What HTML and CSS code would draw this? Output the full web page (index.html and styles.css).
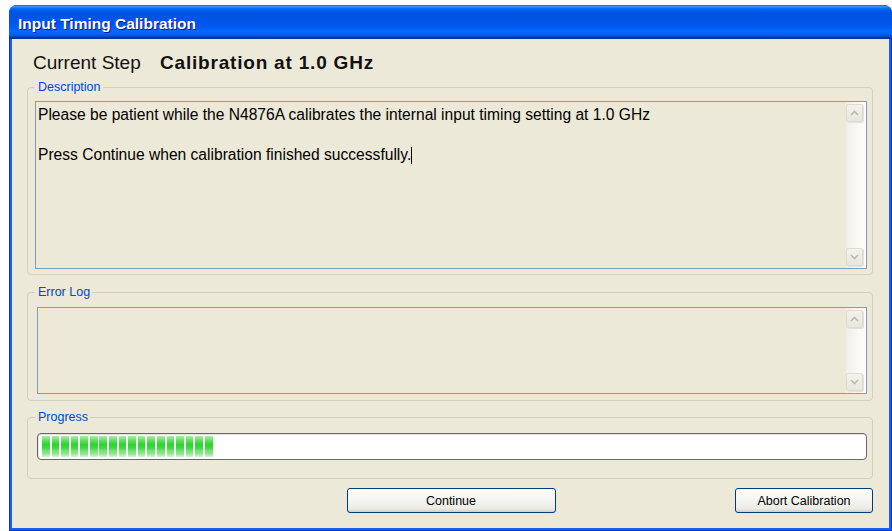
FILE: index.html
```html
<!DOCTYPE html>
<html lang="en">
<head>
<meta charset="utf-8">
<title>Input Timing Calibration</title>
<link rel="stylesheet" href="styles.css">
</head>
<body>
<div class="window">
  <div class="titlebar">Input Timing Calibration</div>
  <div class="frame">
    <div class="body">
      <div class="step-row">
        <span class="step-label">Current Step</span>
        <span class="step-name">Calibration at 1.0 GHz</span>
      </div>

      <fieldset class="group group-desc">
        <legend>Description</legend>
        <div class="textbox textbox-desc">
          <div class="textbox-text">
            <p>Please be patient while the N4876A calibrates the internal input timing setting at 1.0 GHz</p>
            <p>Press Continue when calibration finished successfully.<span class="caret"></span></p>
          </div>
          <div class="scrollbar">
            <div class="scroll-btn">
              <svg viewBox="0 0 9 6" width="9" height="6"><path d="M1 5 L4.5 1.5 L8 5" fill="none" stroke="#bdbbae" stroke-width="1.6"/></svg>
            </div>
            <div class="scroll-btn">
              <svg viewBox="0 0 9 6" width="9" height="6"><path d="M1 1 L4.5 4.5 L8 1" fill="none" stroke="#bdbbae" stroke-width="1.6"/></svg>
            </div>
          </div>
        </div>
      </fieldset>

      <fieldset class="group group-log">
        <legend>Error Log</legend>
        <div class="textbox textbox-log">
          <div class="textbox-text"></div>
          <div class="scrollbar">
            <div class="scroll-btn">
              <svg viewBox="0 0 9 6" width="9" height="6"><path d="M1 5 L4.5 1.5 L8 5" fill="none" stroke="#bdbbae" stroke-width="1.6"/></svg>
            </div>
            <div class="scroll-btn">
              <svg viewBox="0 0 9 6" width="9" height="6"><path d="M1 1 L4.5 4.5 L8 1" fill="none" stroke="#bdbbae" stroke-width="1.6"/></svg>
            </div>
          </div>
        </div>
      </fieldset>

      <fieldset class="group group-progress">
        <legend>Progress</legend>
        <div class="progress">
          <span class="seg"></span><span class="seg"></span><span class="seg"></span>
          <span class="seg"></span><span class="seg"></span><span class="seg"></span>
          <span class="seg"></span><span class="seg"></span><span class="seg"></span>
          <span class="seg"></span><span class="seg"></span><span class="seg"></span>
          <span class="seg"></span><span class="seg"></span><span class="seg"></span>
          <span class="seg"></span><span class="seg"></span><span class="seg"></span>
        </div>
      </fieldset>

      <div class="buttons">
        <span></span>
        <button class="btn btn-continue">Continue</button>
        <button class="btn btn-abort">Abort Calibration</button>
      </div>
    </div>
  </div>
</div>
</body>
</html>
```
FILE: styles.css
```css
html, body {
  margin: 0;
  padding: 0;
  background: #ffffff;
}

body {
  font-family: "Liberation Sans", Arial, sans-serif;
  overflow: hidden;
}

/* ---- window chrome ---- */
.window {
  margin: 5px 0 0 9px;
  width: 883px;
  height: 526px;
  display: flex;
  flex-direction: column;
  border-radius: 8px 8px 0 0;
  overflow: hidden;
  background: #0831d9;
}

.titlebar {
  height: 34px;
  flex: none;
  box-sizing: border-box;
  padding: 4px 0 0 9px;
  display: flex;
  align-items: center;
  color: #ffffff;
  font-weight: bold;
  font-size: 15.5px;
  text-shadow: 1px 1px #0f1089;
  background: linear-gradient(to bottom,
    #0058ee 0%, #3a93ff 4%, #288eff 6%, #127dff 8%, #036ffc 10%,
    #0262ee 14%, #0057e5 20%, #0054e3 24%, #0055eb 56%, #005bf5 66%,
    #026afe 76%, #0062ef 86%, #0052d6 92%, #0040ab 94%, #003092 100%);
}

.frame {
  flex: 1;
  display: flex;
  border: 1px solid #0831d9;
  border-top: 0;
  padding: 0 2px 2px 2px;
  background: #1660ee;
}

.body {
  flex: 1;
  background: #ece9d8;
  display: flex;
  flex-direction: column;
  padding: 13px 16px 0 15px;
}

/* ---- current step heading ---- */
.step-row {
  height: 22px;
  line-height: 22px;
  padding-left: 6px;
  font-size: 19px;
  color: #111111;
  white-space: nowrap;
}

.step-label {
  margin-right: 14px;
}

.step-name {
  font-weight: bold;
  font-size: 19px;
  letter-spacing: 0.8px;
}

/* ---- group boxes ---- */
.group {
  margin: 0;
  min-width: 0;
  border: 1px solid #d0d0bf;
  border-radius: 4px;
  padding: 7px 5px 5px 7px;
}

.group legend {
  font-size: 12.5px;
  line-height: 14px;
  color: #0046d5;
  padding: 0 2px 0 3px;
  margin-left: 0;
}

.group-desc {
  margin-top: 6px;
}

.group-log {
  margin-top: 10px;
  padding: 8px 5px 6px 9px;
}

.group-log legend,
.group-progress legend {
  margin-left: -2px;
}

.group-progress {
  margin-top: 9px;
  padding: 9px 5px 18px 9px;
}

/* ---- read-only text boxes ---- */
.textbox {
  display: flex;
  border: 1px solid #7f9db9;
  background: #ece9d8;
}

.textbox-desc {
  height: 166px;
}

.textbox-log {
  height: 85px;
}

.textbox-text {
  flex: 1;
  padding: 3px 2px;
  font-size: 15.6px;
  line-height: 20px;
  color: #000000;
  white-space: nowrap;
}

.textbox-text p {
  margin: 0 0 20px 0;
}

.caret {
  display: inline-block;
  width: 1px;
  height: 17px;
  background: #000000;
  vertical-align: -4px;
}

.scrollbar {
  width: 20px;
  flex: none;
  display: flex;
  flex-direction: column;
  justify-content: space-between;
  padding: 2px 3px 2px 0;
  box-sizing: border-box;
  background: linear-gradient(to right, #efeee7 0%, #f7f6f2 45%, #fefefd 100%);
}

.scroll-btn {
  width: 17px;
  height: 18px;
  box-sizing: border-box;
  border: 1px solid #dedcd1;
  border-radius: 2px;
  background: linear-gradient(to bottom, #f3f2ec, #e8e6de);
  box-shadow: 1px 1px 0 #e4e2d8;
  display: flex;
  align-items: center;
  justify-content: center;
}

/* ---- progress bar ---- */
.progress {
  height: 27px;
  box-sizing: border-box;
  border: 1px solid #686868;
  border-radius: 4px;
  background: #ffffff;
  padding: 2px 4px;
  display: flex;
  gap: 1.9px;
  box-shadow: inset 1px 1px 0 #e2e2e2;
}

.seg {
  width: 7.7px;
  height: 21px;
  background: linear-gradient(to bottom,
    #acedad 0%, #7be47d 14%, #4cda50 28%, #2ed330 42%,
    #42d845 57%, #76e275 71%, #8fe791 85%, #d8f7d8 100%);
}

/* ---- buttons ---- */
.buttons {
  margin-top: 9px;
  display: grid;
  grid-template-columns: 1fr auto 1fr;
  align-items: center;
}

.btn {
  height: 25px;
  box-sizing: border-box;
  border: 1px solid #003c74;
  border-radius: 3px;
  background: linear-gradient(to bottom, #ffffff 0%, #f6f6f3 40%, #ecebe6 85%, #d6d0c5 100%);
  font-family: "Liberation Sans", Arial, sans-serif;
  font-size: 12.5px;
  color: #000000;
  padding: 0;
}

.btn-continue {
  width: 209px;
  margin-left: 2px;
}

.btn-abort {
  width: 138px;
  justify-self: end;
}
```
